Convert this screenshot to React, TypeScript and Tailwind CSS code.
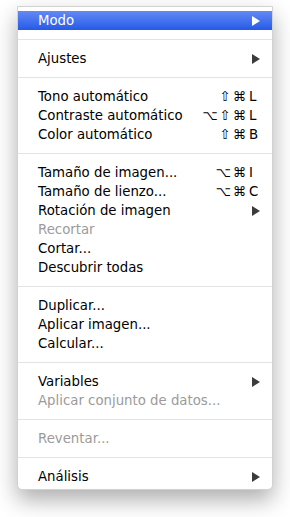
import type { FC } from 'react'

type Item =
  | { kind: 'sep' }
  | {
      kind: 'item'
      label: string
      mods?: string
      keyChar?: string
      sub?: boolean
      disabled?: boolean
      active?: boolean
    }

const items: Item[] = [
  { kind: 'item', label: 'Modo', sub: true, active: true },
  { kind: 'sep' },
  { kind: 'item', label: 'Ajustes', sub: true },
  { kind: 'sep' },
  { kind: 'item', label: 'Tono automático', mods: '⇧⌘', keyChar: 'L' },
  { kind: 'item', label: 'Contraste automático', mods: '⌥⇧⌘', keyChar: 'L' },
  { kind: 'item', label: 'Color automático', mods: '⇧⌘', keyChar: 'B' },
  { kind: 'sep' },
  { kind: 'item', label: 'Tamaño de imagen...', mods: '⌥⌘', keyChar: 'I' },
  { kind: 'item', label: 'Tamaño de lienzo...', mods: '⌥⌘', keyChar: 'C' },
  { kind: 'item', label: 'Rotación de imagen', sub: true },
  { kind: 'item', label: 'Recortar', disabled: true },
  { kind: 'item', label: 'Cortar...' },
  { kind: 'item', label: 'Descubrir todas' },
  { kind: 'sep' },
  { kind: 'item', label: 'Duplicar...' },
  { kind: 'item', label: 'Aplicar imagen...' },
  { kind: 'item', label: 'Calcular...' },
  { kind: 'sep' },
  { kind: 'item', label: 'Variables', sub: true },
  { kind: 'item', label: 'Aplicar conjunto de datos...', disabled: true },
  { kind: 'sep' },
  { kind: 'item', label: 'Reventar...', disabled: true },
  { kind: 'sep' },
  { kind: 'item', label: 'Análisis', sub: true },
]

const Arrow: FC<{ white?: boolean }> = ({ white }) => (
  <svg width="8" height="10" viewBox="0 0 8 10" className="shrink-0">
    <path d="M0 0 L8 5 L0 10 Z" fill={white ? '#ffffff' : '#3c3c3c'} />
  </svg>
)

const App: FC = () => {
  return (
    <div className="w-[290px] h-[517px] bg-white pt-[6px] pl-[17px] font-['DejaVu_Sans',sans-serif]">
      <div className="w-[256px] bg-white border border-[#d2d2d2] rounded-b-[5px] pt-[4px] pb-[3px] shadow-[0_10px_22px_rgba(0,0,0,0.32)]">
        {items.map((it, i) =>
          it.kind === 'sep' ? (
            <div key={i} className="h-[19px] flex items-center">
              <div className="h-px w-full bg-[#e3e3e3]" />
            </div>
          ) : (
            <div
              key={i}
              className={
                'h-[19px] flex items-center pl-[20px] pr-[12px] text-[13.3px] leading-none ' +
                (it.active
                  ? 'bg-gradient-to-b from-[#6489f4] to-[#2459e8] text-white'
                  : it.disabled
                    ? 'text-[#9b9b9b]'
                    : 'text-black')
              }
            >
              <span className="flex-1 whitespace-nowrap">{it.label}</span>
              {it.keyChar && (
                <span className="flex items-center">
                  <span className="tracking-[2px]">{it.mods}</span>
                  <span className="w-[11px] ml-[1px]">{it.keyChar}</span>
                </span>
              )}
              {it.sub && <Arrow white={it.active} />}
            </div>
          )
        )}
      </div>
    </div>
  )
}

export default App
